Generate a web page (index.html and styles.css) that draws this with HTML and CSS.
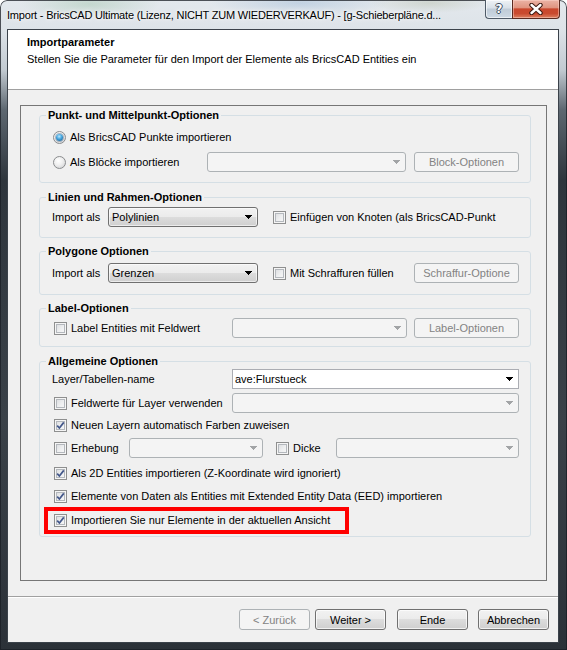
FILE: index.html
```html
<!DOCTYPE html>
<html lang="de">
<head>
<meta charset="utf-8">
<title>Import</title>
<link rel="stylesheet" href="styles.css">
</head>
<body>
<div class="window">
  <div class="titlebar">
    <div class="title">Import - BricsCAD Ultimate (Lizenz, NICHT ZUM WIEDERVERKAUF) - [g-Schieberpläne.d...</div>
    <div class="caption-btns">
      <div class="cap help"><span>?</span></div>
      <div class="cap close">
        <svg width="16" height="12" viewBox="0 0 16 12"><path d="M3.5 2 L12.5 10 M12.5 2 L3.5 10" stroke="#3d1a12" stroke-width="4.4" stroke-linecap="round"/><path d="M3.5 2 L12.5 10 M12.5 2 L3.5 10" stroke="#ffffff" stroke-width="2.4" stroke-linecap="round"/></svg>
      </div>
    </div>
  </div>
  <div class="client">
    <div class="header">
      <div class="h-title">Importparameter</div>
      <div class="h-desc">Stellen Sie die Parameter für den Import der Elemente als BricsCAD Entities ein</div>
    </div>
    <div class="content">
      <div class="panel">
        <fieldset class="group g1">
          <legend>Punkt- und Mittelpunkt-Optionen</legend>
          <div class="row pl7">
            <div class="opt w154"><span class="radio on"></span><span>Als BricsCAD Punkte importieren</span></div>
          </div>
          <div class="row pl7 mt5">
            <div class="opt w154"><span class="radio"></span><span>Als Blöcke importieren</span></div>
            <div class="combo disabled w199"><span></span><svg class="arrow" width="7" height="4" viewBox="0 0 7 4"><path d="M0 0h7v1h-7zM1 1h5v1h-5zM2 2h3v1h-3zM3 3h1v1h-1z"/></svg></div>
            <div class="btn disabled gbtn">Block-Optionen</div>
          </div>
        </fieldset>

        <fieldset class="group g2">
          <legend>Linien und Rahmen-Optionen</legend>
          <div class="row pl6">
            <span class="lbl w56">Import als</span>
            <div class="combo w150"><span>Polylinien</span><svg class="arrow" width="7" height="4" viewBox="0 0 7 4"><path d="M0 0h7v1h-7zM1 1h5v1h-5zM2 2h3v1h-3zM3 3h1v1h-1z"/></svg></div>
            <div class="opt ml15"><span class="cb"></span><span>Einfügen von Knoten (als BricsCAD-Punkt</span></div>
          </div>
        </fieldset>

        <fieldset class="group g3">
          <legend>Polygone Optionen</legend>
          <div class="row pl6">
            <span class="lbl w56">Import als</span>
            <div class="combo w150"><span>Grenzen</span><svg class="arrow" width="7" height="4" viewBox="0 0 7 4"><path d="M0 0h7v1h-7zM1 1h5v1h-5zM2 2h3v1h-3zM3 3h1v1h-1z"/></svg></div>
            <div class="opt ml15"><span class="cb"></span><span>Mit Schraffuren füllen</span></div>
            <div class="btn disabled gbtn">Schraffur-Optione</div>
          </div>
        </fieldset>

        <fieldset class="group g4">
          <legend>Label-Optionen</legend>
          <div class="row pl8">
            <div class="opt w178"><span class="cb"></span><span>Label Entities mit Feldwert</span></div>
            <div class="combo disabled w175"><span></span><svg class="arrow" width="7" height="4" viewBox="0 0 7 4"><path d="M0 0h7v1h-7zM1 1h5v1h-5zM2 2h3v1h-3zM3 3h1v1h-1z"/></svg></div>
            <div class="btn disabled gbtn">Label-Optionen</div>
          </div>
        </fieldset>

        <fieldset class="group g5">
          <legend>Allgemeine Optionen</legend>
          <div class="row pl6">
            <span class="lbl w180">Layer/Tabellen-name</span>
            <div class="combo editable grow"><span>ave:Flurstueck</span><svg class="arrow" width="7" height="4" viewBox="0 0 7 4"><path d="M0 0h7v1h-7zM1 1h5v1h-5zM2 2h3v1h-3zM3 3h1v1h-1z"/></svg></div>
          </div>
          <div class="row pl8 mt4">
            <div class="opt w178"><span class="cb"></span><span>Feldwerte für Layer verwenden</span></div>
            <div class="combo disabled grow"><span></span><svg class="arrow" width="7" height="4" viewBox="0 0 7 4"><path d="M0 0h7v1h-7zM1 1h5v1h-5zM2 2h3v1h-3zM3 3h1v1h-1z"/></svg></div>
          </div>
          <div class="row pl8 mt2">
            <div class="opt"><span class="cb"><svg class="tick" width="9" height="9" viewBox="0 0 9 9"><path d="M1.2 4.6 L3.4 7 L7.8 1.4" fill="none" stroke="#43578a" stroke-width="1.7"/></svg></span><span>Neuen Layern automatisch Farben zuweisen</span></div>
          </div>
          <div class="row pl8 mt3">
            <div class="opt w75"><span class="cb"></span><span>Erhebung</span></div>
            <div class="combo disabled w134"><span></span><svg class="arrow" width="7" height="4" viewBox="0 0 7 4"><path d="M0 0h7v1h-7zM1 1h5v1h-5zM2 2h3v1h-3zM3 3h1v1h-1z"/></svg></div>
            <div class="opt w60 ml13"><span class="cb"></span><span>Dicke</span></div>
            <div class="combo disabled grow"><span></span><svg class="arrow" width="7" height="4" viewBox="0 0 7 4"><path d="M0 0h7v1h-7zM1 1h5v1h-5zM2 2h3v1h-3zM3 3h1v1h-1z"/></svg></div>
          </div>
          <div class="row pl8 mt5">
            <div class="opt"><span class="cb"><svg class="tick" width="9" height="9" viewBox="0 0 9 9"><path d="M1.2 4.6 L3.4 7 L7.8 1.4" fill="none" stroke="#43578a" stroke-width="1.7"/></svg></span><span>Als 2D Entities importieren (Z-Koordinate wird ignoriert)</span></div>
          </div>
          <div class="row pl8 mt3">
            <div class="opt"><span class="cb"><svg class="tick" width="9" height="9" viewBox="0 0 9 9"><path d="M1.2 4.6 L3.4 7 L7.8 1.4" fill="none" stroke="#43578a" stroke-width="1.7"/></svg></span><span>Elemente von Daten als Entities mit Extended Entity Data (EED) importieren</span></div>
          </div>
          <div class="row pl8 mt4 marked">
            <div class="opt"><span class="cb"><svg class="tick" width="9" height="9" viewBox="0 0 9 9"><path d="M1.2 4.6 L3.4 7 L7.8 1.4" fill="none" stroke="#43578a" stroke-width="1.7"/></svg></span><span>Importieren Sie nur Elemente in der aktuellen Ansicht</span></div>
            <div class="highlight"></div>
          </div>
        </fieldset>
      </div>
    </div>
    <div class="footer">
      <div class="btn disabled fbtn">&lt; Zurück</div>
      <div class="btn fbtn ml5">Weiter &gt;</div>
      <div class="btn fbtn ml11">Ende</div>
      <div class="btn fbtn ml10">Abbrechen</div>
    </div>
  </div>
</div>
</body>
</html>
```

FILE: styles.css
```css
* { box-sizing: border-box; }
html, body { margin: 0; padding: 0; background: #ffffff; }
body {
  font-family: "Liberation Sans", Arial, sans-serif;
  font-size: 11px;
  color: #000;
}

/* ---------- window frame ---------- */
.window {
  width: 567px;
  height: 650px;
  display: flex;
  flex-direction: column;
  border-radius: 7px 7px 0 0;
  overflow: hidden;
  box-shadow: inset 0 0 0 1px rgba(25, 30, 36, 0.75);
  background:
    radial-gradient(ellipse 70px 14px at 90px 4px, rgba(140, 185, 150, 0.35), transparent),
    radial-gradient(ellipse 90px 12px at 300px 3px, rgba(120, 160, 200, 0.30), transparent),
    radial-gradient(ellipse 60px 10px at 430px 3px, rgba(150, 160, 120, 0.25), transparent),
    linear-gradient(180deg, #e3e8ed 0px, #dde3e8 30px, #c2cad1 70px, #5d6770 110px, #2e353c 180px, #3a4148 420px, #2b3138 100%);
}

.titlebar {
  height: 29px;
  flex: none;
  display: flex;
  align-items: flex-start;
  padding: 0 7px 0 7px;
}
.title {
  flex: 1;
  min-width: 0;
  margin-top: 7px;
  font-size: 11px;
  letter-spacing: -0.2px;
  line-height: 16px;
  white-space: nowrap;
  overflow: hidden;
  color: #000;
  text-shadow: 0 0 6px rgba(255, 255, 255, 0.95), 0 0 3px rgba(255, 255, 255, 0.9);
}
.caption-btns { display: flex; flex: none; margin-left: 6px; }
.cap {
  height: 19px;
  display: flex;
  align-items: center;
  justify-content: center;
  border: 1px solid #4e5a67;
  border-top: none;
}
.help {
  width: 27px;
  border-right: none;
  border-radius: 0 0 0 4px;
  background: linear-gradient(#eef2f6 0%, #d8e0e8 45%, #bfcbd7 50%, #cdd9e4 100%);
  box-shadow: inset 0 0 0 1px rgba(255, 255, 255, 0.6);
}
.help span {
  font-family: "DejaVu Sans", sans-serif;
  font-weight: bold;
  font-size: 12px;
  line-height: 12px;
  color: #ffffff;
  text-shadow: 1px 0 #3c4b5e, -1px 0 #3c4b5e, 0 1px #3c4b5e, 0 -1px #3c4b5e;
}
.close {
  width: 48px;
  border-color: #5a2a20;
  border-radius: 0 0 4px 0;
  background: linear-gradient(#ebb3a5 0%, #e09581 42%, #c9472d 50%, #c94a2f 75%, #dc8060 100%);
  box-shadow: inset 0 0 0 1px rgba(255, 220, 210, 0.45);
}

/* ---------- client ---------- */
.client {
  flex: none;
  height: 614px;
  margin: 0 8px 0 7px;
  border: 1px solid #3b424a;
  background: #f0f0f0;
  display: flex;
  flex-direction: column;
}
.header {
  height: 60px;
  flex: none;
  background: #ffffff;
  border-bottom: 1px solid #a0a0a0;
  padding: 6px 0 0 19px;
  line-height: 13px;
}
.h-title { font-weight: bold; }
.h-desc { margin-top: 4px; }

.content {
  flex: 1;
  display: flex;
  flex-direction: column;
  padding: 15px 11px 15px 12px;
}
.panel {
  flex: 1;
  border: 1px solid #767676;
  padding: 3px 15px 0 18px;
}

/* ---------- group boxes ---------- */
.group {
  margin: 0;
  min-width: 0;
  border: 1px solid #d5dfe5;
  border-radius: 3px;
  padding: 0 11px 0 6px;
}
.group legend {
  font-weight: bold;
  line-height: 13px;
  padding: 0 2px;
  margin: 0;
}
.g1 { padding-top: 5px; padding-bottom: 10px; }
.g2 { margin-top: 8px; padding-top: 3px; padding-bottom: 10px; }
.g3 { margin-top: 7px; padding-top: 5px; padding-bottom: 11px; }
.g4 { margin-top: 7px; padding-top: 3px; padding-bottom: 8px; }
.g5 { margin-top: 8px; padding-top: 1px; padding-bottom: 6px; }

.row {
  height: 20px;
  display: flex;
  align-items: center;
  line-height: 13px;
  white-space: nowrap;
}
.pl6 { padding-left: 6px; }
.pl7 { padding-left: 7px; }
.pl8 { padding-left: 8px; }
.mt2 { margin-top: 2px; }
.mt3 { margin-top: 3px; }
.mt4 { margin-top: 4px; }
.mt5 { margin-top: 5px; }
.ml5 { margin-left: 5px; }
.ml10 { margin-left: 10px; }
.ml11 { margin-left: 11px; }
.ml13 { margin-left: 13px; }
.ml15 { margin-left: 15px; }

.opt { display: flex; align-items: center; flex: none; }
.lbl { flex: none; }
.w56 { width: 56px; }
.w60 { width: 60px; }
.w75 { width: 75px; }
.w134 { width: 134px; }
.w150 { width: 150px; }
.w154 { width: 154px; }
.w175 { width: 175px; }
.w178 { width: 178px; }
.w180 { width: 180px; }
.w199 { width: 199px; }
.grow { flex: 1; }

/* ---------- checkbox & radio ---------- */
.cb {
  width: 13px;
  height: 13px;
  flex: none;
  margin-right: 4px;
  border: 1px solid #8e8f8f;
  background: linear-gradient(135deg, #d6d8db 0%, #eeeff0 55%, #fafafa 100%);
  box-shadow: inset 0 0 0 1px #f5f5f5, inset 0 0 0 2px #b4b8bd;
  display: flex;
  align-items: center;
  justify-content: center;
}
.tick { display: block; }
.radio {
  width: 13px;
  height: 13px;
  flex: none;
  margin-right: 4px;
  border-radius: 50%;
  border: 1px solid #8a8c8e;
  background: radial-gradient(circle at 40% 35%, #ffffff 0%, #eeeeee 45%, #c9cbcd 100%);
  display: flex;
  align-items: center;
  justify-content: center;
}
.radio.on::after {
  content: "";
  width: 7px;
  height: 7px;
  border-radius: 50%;
  background: radial-gradient(circle at 45% 35%, #b8e8ff 0%, #43a3dc 45%, #15507f 100%);
  box-shadow: 0 0 0 1px rgba(30, 70, 110, 0.35);
}

/* ---------- combo boxes ---------- */
.combo {
  height: 20px;
  flex: none;
  display: flex;
  align-items: center;
  justify-content: space-between;
  padding: 0 5px 0 3px;
  border: 1px solid #707070;
  border-radius: 3px;
  background: linear-gradient(#f2f2f2 0%, #ebebeb 50%, #dddddd 50%, #cfcfcf 100%);
  box-shadow: inset 0 0 0 1px rgba(255, 255, 255, 0.6);
}
.combo.grow { flex: 1; }
.combo .arrow { fill: #000; display: block; flex: none; }
.combo.disabled {
  border-color: #adb2b5;
  background: #f4f4f4;
  box-shadow: none;
}
.combo.disabled .arrow { fill: #a2a4a6; }
.combo.editable {
  border-color: #abadb3;
  border-radius: 0;
  background: #ffffff;
  box-shadow: none;
  padding-left: 2px;
}

/* ---------- buttons ---------- */
.btn {
  height: 20px;
  flex: none;
  display: flex;
  align-items: center;
  justify-content: center;
  border: 1px solid #707070;
  border-radius: 3px;
  background: linear-gradient(#f2f2f2 0%, #ebebeb 50%, #dddddd 50%, #cfcfcf 100%);
  box-shadow: inset 0 0 0 1px rgba(255, 255, 255, 0.7);
}
.btn.disabled {
  border-color: #adb2b5;
  background: #f4f4f4;
  color: #838383;
  box-shadow: none;
}
.gbtn { width: 105px; margin-left: auto; }

.footer {
  height: 46px;
  flex: none;
  border-top: 1px solid #a0a0a0;
  box-shadow: inset 0 1px 0 #ffffff;
  padding: 12px 9px 0 0;
  display: flex;
  justify-content: flex-end;
  align-items: flex-start;
}
.fbtn { width: 71px; height: 21px; }

/* ---------- annotation ---------- */
.marked { position: relative; }
.highlight {
  position: absolute;
  left: -2px;
  top: -3px;
  width: 305px;
  height: 27px;
  border: 4px solid #ff0000;
}
```
